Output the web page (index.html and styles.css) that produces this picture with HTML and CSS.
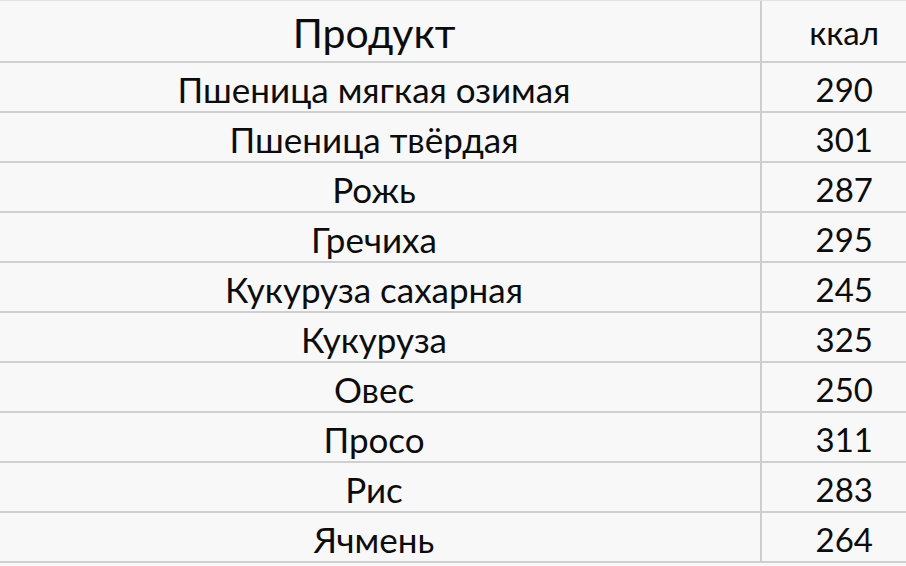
FILE: index.html
```html
<!DOCTYPE html>
<html lang="ru">
<head>
<meta charset="utf-8">
<title>Калорийность злаков</title>
<link rel="stylesheet" href="styles.css">
</head>
<body>
<div class="sheet">
  <div class="row head">
    <div class="cell name">Продукт</div>
    <div class="cell kcal">ккал</div>
  </div>
  <div class="row"><div class="cell name">Пшеница мягкая озимая</div><div class="cell num">290</div></div>
  <div class="row"><div class="cell name">Пшеница твёрдая</div><div class="cell num">301</div></div>
  <div class="row"><div class="cell name">Рожь</div><div class="cell num">287</div></div>
  <div class="row"><div class="cell name">Гречиха</div><div class="cell num">295</div></div>
  <div class="row"><div class="cell name">Кукуруза сахарная</div><div class="cell num">245</div></div>
  <div class="row"><div class="cell name">Кукуруза</div><div class="cell num">325</div></div>
  <div class="row"><div class="cell name">Овес</div><div class="cell num">250</div></div>
  <div class="row"><div class="cell name">Просо</div><div class="cell num">311</div></div>
  <div class="row"><div class="cell name">Рис</div><div class="cell num">283</div></div>
  <div class="row"><div class="cell name">Ячмень</div><div class="cell num">264</div></div>
</div>
</body>
</html>
```
FILE: styles.css
```css
html, body {
  margin: 0;
  padding: 0;
  background: #f8f8f8;
  overflow: hidden;
}
body {
  width: 906px;
  height: 566px;
  font-family: Lato, "Noto Sans", sans-serif;
  color: #0c0c0c;
}
.sheet {
  display: flex;
  flex-direction: column;
  border-top: 1px solid #e2e2e2;
}
.row {
  display: grid;
  grid-template-columns: 762px 1fr;
  height: 50px;
  border-bottom: 2px solid #cfcfcf;
  box-sizing: border-box;
}
.row.head {
  height: 62px;
}
.cell {
  display: flex;
  align-items: center;
  padding-top: 4px;
  font-size: 35px;
  line-height: 1;
}
.name {
  justify-content: center;
  padding-right: 12px;
  border-right: 2px solid #cdcdcd;
}
.num {
  justify-content: flex-end;
  padding-right: 33px;
  font-size: 33px;
}
.head .name {
  font-size: 41px;
  padding-top: 2px;
}
.head .kcal {
  justify-content: flex-end;
  padding-right: 27px;
  font-size: 33px;
  padding-top: 2px;
}
```
